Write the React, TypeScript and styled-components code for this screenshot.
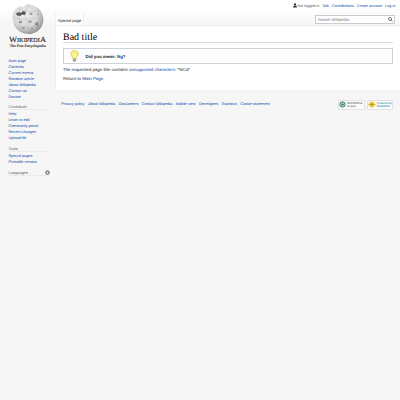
import React from 'react';
import styled, { createGlobalStyle } from 'styled-components';

const Global = createGlobalStyle`
  * { box-sizing: border-box; }
  body { margin: 0; background: #f6f6f6; font-family: "Liberation Sans", Arial, sans-serif; text-rendering: geometricPrecision; overflow: hidden; }
`;
const Page = styled.div`
  display: grid;
  grid-template-columns: 55px 345px;
  width: 400px;
  height: 400px;
  background: linear-gradient(#fff 0, #fff 8px, #f6f6f6 25px);
  color: #222;
`;
const Sidebar = styled.aside`
  padding: 1px 0 0 8.5px;
`;
const Logo = styled.svg`
  display: block;
  width: 50px;
  height: 50px;
  margin: 0 0 6.6px -5.5px;
`;
const Portal = styled.nav`
  display: flex;
  flex-direction: column;
  margin-bottom: 4px;
`;
const PortalTitle = styled.div`
  display: flex;
  justify-content: space-between;
  align-items: center;
  width: 41px;
  height: 6.8px;
  margin-bottom: 1px;
  font-size: 3.95px;
  color: #54595d;
  border-bottom: 1px solid #ebebec;
`;
const Link = styled.a`
  color: #0645ad;
`;
const SideLink = styled(Link)`
  height: 6px;
  line-height: 6px;
  font-size: 3.8px;
  white-space: nowrap;
`;
const Main = styled.div`
  display: flex;
  flex-direction: column;
`;
const Personal = styled.div`
  display: flex;
  justify-content: flex-end;
  align-items: flex-start;
  height: 12px;
  padding: 3px 4.7px 0 0;
  gap: 2.8px;
  font-size: 3.78px;
  line-height: 6px;
  white-space: nowrap;
`;
const Muted = styled.span`
  color: #54595d;
`;
const UserIcon = styled.svg`
  width: 4px;
  height: 5px;
  margin-right: -2.2px;
`;
const Tabs = styled.div`
  display: flex;
  justify-content: space-between;
  height: 13px;
`;
const Tab = styled.div`
  width: 29px;
  padding-left: 1.8px;
  border-left: 1px solid #edf4f8;
  border-right: 1px solid #e7f0f6;
  background: linear-gradient(#fafafa, #fff);
  font-size: 4.06px;
  line-height: 17.6px;
  white-space: nowrap;
`;
const Search = styled.div`
  display: flex;
  align-items: center;
  justify-content: space-between;
  width: 80px;
  height: 9px;
  margin: 3px 5px 0 0;
  padding: 0 1.5px;
  border: 1px solid #c8ccd1;
  background: #fff;
  color: #72777d;
  font-size: 4.05px;
`;
const Content = styled.main`
  height: 66px;
  padding: 5px 7.5px 0 7px;
  background: #fff;
  border: 1px solid #e5f0f7;
  border-right: 0;
`;
const Title = styled.h1`
  height: 12px;
  margin: 0 0 5px;
  border-bottom: 1px solid #d9dbdd;
  font: 400 10px/13.6px "Liberation Serif", Georgia, serif;
  color: #000;
`;
const Notice = styled.div`
  display: flex;
  align-items: center;
  height: 16px;
  padding-left: 6px;
  gap: 6.5px;
  border: 1px solid #cfd2d6;
  background: #fdfdfd;
  font-size: 4.4px;
  font-weight: 700;
`;
const Text = styled.p`
  margin: 2px 0;
  font-size: 4.38px;
  line-height: 7px;
  white-space: nowrap;
`;
const Footer = styled.footer`
  display: flex;
  justify-content: space-between;
  padding: 9px 7px 0 6.3px;
`;
const FooterLinks = styled.div`
  display: flex;
  gap: 3.4px;
  font-size: 3.81px;
  line-height: 7px;
  padding-top: 0.8px;
  white-space: nowrap;
`;
const Badges = styled.div`
  display: flex;
  gap: 2px;
`;
const Badge = styled.div<{ $w: number }>`
  display: flex;
  align-items: center;
  gap: 1px;
  width: ${(p) => p.$w}px;
  height: 9.5px;
  border: 1px solid #e2e3e5;
  background: #fcfcfc;
`;
const BadgeText = styled.div<{ $color: string }>`
  color: ${(p) => p.$color};
  font-size: 2.9px;
  line-height: 3px;
  white-space: nowrap;
`;

const Globe = () => (
  <Logo viewBox="3 1 50 50">
    <defs>
      <radialGradient id="globe" cx=".4" cy=".35" r=".72">
        <stop offset="0" stopColor="#eee" />
        <stop offset=".6" stopColor="#d6d6d6" />
        <stop offset="1" stopColor="#858585" />
      </radialGradient>
    </defs>
    <path d="M17 8L20 6L23 7L27 4L32 5L38 8Q43 13 43.5 19Q43 31 31 34Q20 35 14.5 26Q11 18 14 11Z" fill="url(#globe)" />
    <path d="M16 13.5L19 12L21 13L23 11L26 12L25 15L22 14.5L20 16L17 15.5Z" fill="#555" />
    <path d="M29 4.5Q24 12 26 20Q27 28 31 33M38 9Q40 19 35 32M20 8Q17 17 22 31M13 17Q20 20 26 19T43 18M15 26Q24 29 41 26M18 9Q28 13 40 11" fill="none" stroke="#aaa" strokeWidth=".35" />
    <g fontFamily="Liberation Serif, serif" fill="#444">
      <text x="19" y="22.5" fontSize="4">Ω</text>
      <text x="29.5" y="15" fontSize="4">И</text>
      <text x="28" y="22.5" fontSize="4.2">W</text>
      <text x="37" y="16" fontSize="4">7</text>
      <text x="35" y="25" fontSize="3.6">維</text>
      <text x="22" y="28.5" fontSize="4">ש</text>
      <text x="31" y="30" fontSize="4">J</text>
    </g>
    <g fontFamily="Liberation Serif, serif" fill="#222">
      <text x="9" y="42.2" fontSize="8" fontVariant="small-caps" textLength="37" lengthAdjust="spacingAndGlyphs" stroke="#222" strokeWidth=".1">WikipediA</text>
      <text x="9.7" y="46.8" fontSize="3.9" textLength="36" lengthAdjust="spacingAndGlyphs" stroke="#222" strokeWidth=".1">The Free Encyclopedia</text>
    </g>
  </Logo>
);

const Bulb = () => (
  <svg width="9" height="12" viewBox="0 0 9 12">
    <path d="M4.5.6C2 .6.6 2.3.8 4.4C1 6.2 2.6 6.7 2.7 8.4H6.3C6.4 6.7 8 6.2 8.2 4.4C8.4 2.3 7 .6 4.5.6Z" fill="#f5ee72" stroke="#cdc357" strokeWidth=".6" />
    <path d="M3 3L4 5V8H5V5L6 3" fill="none" stroke="#fffde0" strokeWidth=".7" />
    <path d="M2.9 8.4H6.1V10.5L5.3 11.4H3.7L2.9 10.5Z" fill="#918f7d" />
    <path d="M3 9.5H6" stroke="#ddd" strokeWidth=".5" />
  </svg>
);

const menu = ['Main page', 'Contents', 'Current events', 'Random article', 'About Wikipedia', 'Contact us', 'Donate'];
const contribute = ['Help', 'Learn to edit', 'Community portal', 'Recent changes', 'Upload file'];
const tools = ['Special pages', 'Printable version'];
const footer = ['Privacy policy', 'About Wikipedia', 'Disclaimers', 'Contact Wikipedia', 'Mobile view', 'Developers', 'Statistics', 'Cookie statement'];

const links = (items: string[]) => items.map((t) => <SideLink key={t}>{t}</SideLink>);

export default function App() {
  return (
    <>
      <Global />
      <Page>
        <Sidebar>
          <Globe />
          <Portal>{links(menu)}</Portal>
          <Portal><PortalTitle>Contribute</PortalTitle>{links(contribute)}</Portal>
          <Portal><PortalTitle>Tools</PortalTitle>{links(tools)}</Portal>
          <Portal>
            <PortalTitle>
              Languages
              <svg width="5" height="5" viewBox="0 0 5 5">
                <circle cx="2.5" cy="2.5" r="1.5" fill="none" stroke="#54595d" strokeWidth="1" />
                <circle cx="2.5" cy="2.5" r="2.1" fill="none" stroke="#54595d" strokeWidth=".6" strokeDasharray=".8 .85" />
              </svg>
            </PortalTitle>
          </Portal>
        </Sidebar>
        <Main>
          <Personal>
            <UserIcon viewBox="0 0 4 5">
              <circle cx="2" cy="1.4" r="1.1" fill="#333" />
              <path d="M.2 4.6V3.5Q.4 2.6 2 2.6T3.8 3.5V4.6Z" fill="#333" />
            </UserIcon>
            <Muted>Not logged in</Muted>
            <Link>Talk</Link><Link>Contributions</Link><Link>Create account</Link><Link>Log in</Link>
          </Personal>
          <Tabs>
            <Tab>Special page</Tab>
            <Search>
              Search Wikipedia
              <svg width="5" height="5" viewBox="0 0 5 5" fill="none" stroke="#444" strokeWidth=".7">
                <circle cx="2" cy="2" r="1.5" />
                <path d="M3.1 3.1L4.7 4.7" />
              </svg>
            </Search>
          </Tabs>
          <Content>
            <Title>Bad title</Title>
            <Notice><Bulb /><span>Did you mean: <Link>Ng</Link>?</span></Notice>
            <Text>The requested page title contains <Link>unsupported characters</Link>: "%Cd".</Text>
            <Text>Return to <Link>Main Page</Link>.</Text>
          </Content>
          <Footer>
            <FooterLinks>{footer.map((t) => <Link key={t}>{t}</Link>)}</FooterLinks>
            <Badges>
              <Badge $w={27}>
                <svg width="7" height="7" viewBox="0 0 7 7">
                  <circle cx="3.5" cy="3.5" r="2.6" fill="none" stroke="#176b65" strokeWidth="1" />
                  <circle cx="3.5" cy="3.5" r="1.3" fill="#397b55" />
                </svg>
                <BadgeText $color="#444">WIKIMEDIA<br />project</BadgeText>
              </Badge>
              <Badge $w={26}>
                <svg width="8" height="7" viewBox="0 0 8 7">
                  <circle cx="4" cy="3.5" r="3.1" fill="#f2cc38" />
                  <path d="M0 3.5H8" stroke="#d1ad23" strokeWidth=".7" />
                  <circle cx="4" cy="3.5" r="1" fill="#8c873e" />
                </svg>
                <BadgeText $color="#087c9d">Powered by<br />MediaWiki</BadgeText>
              </Badge>
            </Badges>
          </Footer>
        </Main>
      </Page>
    </>
  );
}
